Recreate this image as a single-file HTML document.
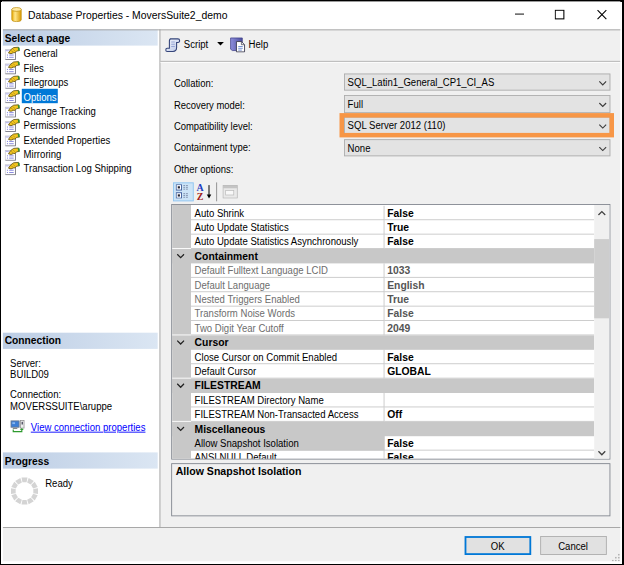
<!DOCTYPE html>
<html><head><meta charset="utf-8"><title>Database Properties</title>
<style>
*{box-sizing:border-box;margin:0;padding:0}
html,body{width:624px;height:565px;overflow:hidden;background:#000}
body{font-family:"Liberation Sans",sans-serif;font-size:11px;color:#000;position:relative}
#frame{position:absolute;left:1.45px;top:1.5px;width:620.95px;height:562px;background:#fff}
#win{position:absolute;left:0;top:0;width:687.3px;height:622.3px;background:#f0f0f0;transform-origin:0 0;transform:translate(2px,1.5px) scale(0.9);overflow:hidden;letter-spacing:-0.16px;white-space:nowrap}
#win div,#win span,#win svg{position:absolute}
#win span{font-size:12.5px;line-height:16px;transform-origin:0 0;transform:scaleX(0.85);letter-spacing:0}
#win span.b{font-weight:bold;transform:scaleX(0.94)}
#title{left:0;top:0;width:689px;height:31px;background:#fff}
#win #title .t{left:28.5px;top:7.5px;font-size:12.5px;transform:scaleX(0.924);color:#000}
#left{left:0;top:31px;width:174.5px;height:553px;background:#fff}
.hdr{left:0;width:173px;height:18px;background:linear-gradient(90deg,#bccde4,#dbe6f3)}
#win .hdr span{left:3px;top:1.5px;font-weight:bold;transform:scaleX(0.91)}
.nav{left:24px;top:0.6px}
.navsel{left:22px;top:0;width:40px;height:16px;background:#0078d7}
.ni{left:3px;top:0}
.lt{left:9px}
#win .lbl{left:191px;transform:scaleX(0.84)}
.cb{left:380px;width:296px;height:19.7px;background:#e3e3e3;border:1px solid #adadad}
.cb span{left:3px;top:1.1px}
.cb svg{right:3.5px;top:7px}
#grid{left:188px;top:225px;width:488px;height:284px;border:1px solid #828790;background:#fff;overflow:hidden}
.row{left:0;width:469px;height:16px}
.row .g{left:0;top:0;width:19px;height:16px;background:#c8c8c8}
.row .l{left:20.5px;top:0;width:215.5px;height:16px;border-bottom:1px solid #c8c8c8;border-right:1px solid #c8c8c8;overflow:hidden}
.row .l span{left:4.7px;top:0}
#win .row .v span{left:3px;top:0;font-weight:bold;transform:scaleX(0.92)}
.row .v{left:236px;top:0;width:233px;height:16px;border-bottom:1px solid #c8c8c8}
.row.dis .l{color:#6d6d6d}
.row.dis .v{color:#555}
.row.sel .l{background:#c8c8c8;top:-1px;height:17px}
.row.sel .l span{top:1px}
.cat{left:0;width:469px;height:16px;background:#c8c8c8}
#win .cat span{left:25px;top:0;font-weight:bold;transform:scaleX(0.92)}
.cat svg{left:5px;top:5px}
.btn{width:74px;height:21px;background:#e1e1e1;border:1px solid #adadad}
.btn span{top:2px}
</style></head><body>
<div id="frame"></div>
<div id="win">
<div id="title">
<svg style="left:9.8px;top:5.8px" width="12.4" height="16.8" viewBox="0 0 14 18" preserveAspectRatio="none"><defs><linearGradient id="dbg" x1="0" x2="1" y1="0" y2="0"><stop offset="0" stop-color="#e8a800"/><stop offset="0.35" stop-color="#ffe68a"/><stop offset="1" stop-color="#d89800"/></linearGradient></defs><path d="M1 3 v12 a6 2.5 0 0 0 12 0 v-12 z" fill="url(#dbg)" stroke="#b88600" stroke-width="0.8"/><ellipse cx="7" cy="3" rx="6" ry="2.3" fill="#ffe9a0" stroke="#b88600" stroke-width="0.8"/></svg>
<span class="t">Database Properties - MoversSuite2_demo</span>
<svg style="left:569.5px;top:13.3px" width="12" height="2"><rect width="10" height="1.2" y="0.3" fill="#000"/></svg>
<svg style="left:613.5px;top:8.5px" width="12" height="12"><rect x="0.7" y="0.7" width="9.6" height="9.6" fill="none" stroke="#000" stroke-width="1.2"/></svg>
<svg style="left:660.5px;top:8.5px" width="12" height="12"><path d="M0.7 0.7 L10.5 10.5 M10.5 0.7 L0.7 10.5" stroke="#000" stroke-width="1.2"/></svg>
</div>
<div id="left">
<div class="hdr" style="top:0"><span>Select a page</span></div>
<div style="left:0;top:18px;width:173px;height:16px"><svg class="ni" width="17" height="16" viewBox="0 0 17 16"><rect x="0.5" y="4.5" width="11.5" height="11" fill="#fff" stroke="#c4c4cc"/><path d="M12 5v10.5H1" fill="none" stroke="#7c7c84" stroke-width="1"/><rect x="1" y="5" width="3.5" height="1.2" fill="#b4b4ee"/><path d="M2.5 10.5h1.2M5 10.5h5M2.5 13h1.2M5 13h5" stroke="#8a8ade" stroke-width="1.1"/><path d="M4.2 8.2 L6.6 4.6 L10 2.2 L15.4 1.8 L16.2 5.6 L13.2 6 L11.6 7.8 L9.6 8 L7 9 Z" fill="#f3c61f" stroke="#5e4e12" stroke-width="0.9"/><path d="M7 5.5l3 2M9 3.8l3 2.6" stroke="#a8841a" stroke-width="0.7"/><path d="M14.4 1.8 L16.5 2.4 L16.5 6 L15 5.2 Z" fill="#2f8f2f"/></svg><span class="nav">General</span></div>
<div style="left:0;top:34px;width:173px;height:16px"><svg class="ni" width="17" height="16" viewBox="0 0 17 16"><rect x="0.5" y="4.5" width="11.5" height="11" fill="#fff" stroke="#c4c4cc"/><path d="M12 5v10.5H1" fill="none" stroke="#7c7c84" stroke-width="1"/><rect x="1" y="5" width="3.5" height="1.2" fill="#b4b4ee"/><path d="M2.5 10.5h1.2M5 10.5h5M2.5 13h1.2M5 13h5" stroke="#8a8ade" stroke-width="1.1"/><path d="M4.2 8.2 L6.6 4.6 L10 2.2 L15.4 1.8 L16.2 5.6 L13.2 6 L11.6 7.8 L9.6 8 L7 9 Z" fill="#f3c61f" stroke="#5e4e12" stroke-width="0.9"/><path d="M7 5.5l3 2M9 3.8l3 2.6" stroke="#a8841a" stroke-width="0.7"/><path d="M14.4 1.8 L16.5 2.4 L16.5 6 L15 5.2 Z" fill="#2f8f2f"/></svg><span class="nav">Files</span></div>
<div style="left:0;top:50px;width:173px;height:16px"><svg class="ni" width="17" height="16" viewBox="0 0 17 16"><rect x="0.5" y="4.5" width="11.5" height="11" fill="#fff" stroke="#c4c4cc"/><path d="M12 5v10.5H1" fill="none" stroke="#7c7c84" stroke-width="1"/><rect x="1" y="5" width="3.5" height="1.2" fill="#b4b4ee"/><path d="M2.5 10.5h1.2M5 10.5h5M2.5 13h1.2M5 13h5" stroke="#8a8ade" stroke-width="1.1"/><path d="M4.2 8.2 L6.6 4.6 L10 2.2 L15.4 1.8 L16.2 5.6 L13.2 6 L11.6 7.8 L9.6 8 L7 9 Z" fill="#f3c61f" stroke="#5e4e12" stroke-width="0.9"/><path d="M7 5.5l3 2M9 3.8l3 2.6" stroke="#a8841a" stroke-width="0.7"/><path d="M14.4 1.8 L16.5 2.4 L16.5 6 L15 5.2 Z" fill="#2f8f2f"/></svg><span class="nav">Filegroups</span></div>
<div style="left:0;top:66px;width:173px;height:16px"><svg class="ni" width="17" height="16" viewBox="0 0 17 16"><rect x="0.5" y="4.5" width="11.5" height="11" fill="#fff" stroke="#c4c4cc"/><path d="M12 5v10.5H1" fill="none" stroke="#7c7c84" stroke-width="1"/><rect x="1" y="5" width="3.5" height="1.2" fill="#b4b4ee"/><path d="M2.5 10.5h1.2M5 10.5h5M2.5 13h1.2M5 13h5" stroke="#8a8ade" stroke-width="1.1"/><path d="M4.2 8.2 L6.6 4.6 L10 2.2 L15.4 1.8 L16.2 5.6 L13.2 6 L11.6 7.8 L9.6 8 L7 9 Z" fill="#f3c61f" stroke="#5e4e12" stroke-width="0.9"/><path d="M7 5.5l3 2M9 3.8l3 2.6" stroke="#a8841a" stroke-width="0.7"/><path d="M14.4 1.8 L16.5 2.4 L16.5 6 L15 5.2 Z" fill="#2f8f2f"/></svg><div class=navsel></div><span class="nav" style=color:#fff>Options</span></div>
<div style="left:0;top:82px;width:173px;height:16px"><svg class="ni" width="17" height="16" viewBox="0 0 17 16"><rect x="0.5" y="4.5" width="11.5" height="11" fill="#fff" stroke="#c4c4cc"/><path d="M12 5v10.5H1" fill="none" stroke="#7c7c84" stroke-width="1"/><rect x="1" y="5" width="3.5" height="1.2" fill="#b4b4ee"/><path d="M2.5 10.5h1.2M5 10.5h5M2.5 13h1.2M5 13h5" stroke="#8a8ade" stroke-width="1.1"/><path d="M4.2 8.2 L6.6 4.6 L10 2.2 L15.4 1.8 L16.2 5.6 L13.2 6 L11.6 7.8 L9.6 8 L7 9 Z" fill="#f3c61f" stroke="#5e4e12" stroke-width="0.9"/><path d="M7 5.5l3 2M9 3.8l3 2.6" stroke="#a8841a" stroke-width="0.7"/><path d="M14.4 1.8 L16.5 2.4 L16.5 6 L15 5.2 Z" fill="#2f8f2f"/></svg><span class="nav">Change Tracking</span></div>
<div style="left:0;top:98px;width:173px;height:16px"><svg class="ni" width="17" height="16" viewBox="0 0 17 16"><rect x="0.5" y="4.5" width="11.5" height="11" fill="#fff" stroke="#c4c4cc"/><path d="M12 5v10.5H1" fill="none" stroke="#7c7c84" stroke-width="1"/><rect x="1" y="5" width="3.5" height="1.2" fill="#b4b4ee"/><path d="M2.5 10.5h1.2M5 10.5h5M2.5 13h1.2M5 13h5" stroke="#8a8ade" stroke-width="1.1"/><path d="M4.2 8.2 L6.6 4.6 L10 2.2 L15.4 1.8 L16.2 5.6 L13.2 6 L11.6 7.8 L9.6 8 L7 9 Z" fill="#f3c61f" stroke="#5e4e12" stroke-width="0.9"/><path d="M7 5.5l3 2M9 3.8l3 2.6" stroke="#a8841a" stroke-width="0.7"/><path d="M14.4 1.8 L16.5 2.4 L16.5 6 L15 5.2 Z" fill="#2f8f2f"/></svg><span class="nav">Permissions</span></div>
<div style="left:0;top:114px;width:173px;height:16px"><svg class="ni" width="17" height="16" viewBox="0 0 17 16"><rect x="0.5" y="4.5" width="11.5" height="11" fill="#fff" stroke="#c4c4cc"/><path d="M12 5v10.5H1" fill="none" stroke="#7c7c84" stroke-width="1"/><rect x="1" y="5" width="3.5" height="1.2" fill="#b4b4ee"/><path d="M2.5 10.5h1.2M5 10.5h5M2.5 13h1.2M5 13h5" stroke="#8a8ade" stroke-width="1.1"/><path d="M4.2 8.2 L6.6 4.6 L10 2.2 L15.4 1.8 L16.2 5.6 L13.2 6 L11.6 7.8 L9.6 8 L7 9 Z" fill="#f3c61f" stroke="#5e4e12" stroke-width="0.9"/><path d="M7 5.5l3 2M9 3.8l3 2.6" stroke="#a8841a" stroke-width="0.7"/><path d="M14.4 1.8 L16.5 2.4 L16.5 6 L15 5.2 Z" fill="#2f8f2f"/></svg><span class="nav">Extended Properties</span></div>
<div style="left:0;top:130px;width:173px;height:16px"><svg class="ni" width="17" height="16" viewBox="0 0 17 16"><rect x="0.5" y="4.5" width="11.5" height="11" fill="#fff" stroke="#c4c4cc"/><path d="M12 5v10.5H1" fill="none" stroke="#7c7c84" stroke-width="1"/><rect x="1" y="5" width="3.5" height="1.2" fill="#b4b4ee"/><path d="M2.5 10.5h1.2M5 10.5h5M2.5 13h1.2M5 13h5" stroke="#8a8ade" stroke-width="1.1"/><path d="M4.2 8.2 L6.6 4.6 L10 2.2 L15.4 1.8 L16.2 5.6 L13.2 6 L11.6 7.8 L9.6 8 L7 9 Z" fill="#f3c61f" stroke="#5e4e12" stroke-width="0.9"/><path d="M7 5.5l3 2M9 3.8l3 2.6" stroke="#a8841a" stroke-width="0.7"/><path d="M14.4 1.8 L16.5 2.4 L16.5 6 L15 5.2 Z" fill="#2f8f2f"/></svg><span class="nav">Mirroring</span></div>
<div style="left:0;top:146px;width:173px;height:16px"><svg class="ni" width="17" height="16" viewBox="0 0 17 16"><rect x="0.5" y="4.5" width="11.5" height="11" fill="#fff" stroke="#c4c4cc"/><path d="M12 5v10.5H1" fill="none" stroke="#7c7c84" stroke-width="1"/><rect x="1" y="5" width="3.5" height="1.2" fill="#b4b4ee"/><path d="M2.5 10.5h1.2M5 10.5h5M2.5 13h1.2M5 13h5" stroke="#8a8ade" stroke-width="1.1"/><path d="M4.2 8.2 L6.6 4.6 L10 2.2 L15.4 1.8 L16.2 5.6 L13.2 6 L11.6 7.8 L9.6 8 L7 9 Z" fill="#f3c61f" stroke="#5e4e12" stroke-width="0.9"/><path d="M7 5.5l3 2M9 3.8l3 2.6" stroke="#a8841a" stroke-width="0.7"/><path d="M14.4 1.8 L16.5 2.4 L16.5 6 L15 5.2 Z" fill="#2f8f2f"/></svg><span class="nav">Transaction Log Shipping</span></div>
<div class="hdr" style="top:336.6px"><span>Connection</span></div>
<span class="lt" style="top:362.5px">Server:</span>
<span class="lt" style="top:375px">BUILD09</span>
<span class="lt" style="top:398px">Connection:</span>
<span class="lt" style="top:410.5px">MOVERSSUITE\aruppe</span>
<svg style="left:9px;top:434px" width="17" height="15" viewBox="0 0 17 15"><rect x="1" y="1" width="9" height="7" fill="#3d7fd6" stroke="#6a7a90" stroke-width="1"/><rect x="2.5" y="2.5" width="3" height="2" fill="#8ab8f0"/><rect x="3" y="8.5" width="5" height="1.5" fill="#8a8a8a"/><rect x="11.5" y="0.5" width="4" height="8.5" fill="#eee" stroke="#8a8a8a" stroke-width="0.8"/><rect x="12.7" y="2" width="1.6" height="3" fill="#556"/><path d="M3.5 10.5v2.5h9.5v-2.5" fill="none" stroke="#2e9a2e" stroke-width="1.3"/><path d="M10.8 11.2l2.2-2.4 2.2 2.4z" fill="#2e9a2e"/></svg>
<span style="left:32px;top:433.5px;color:#0000ff;text-decoration:underline">View connection properties</span>
<div class="hdr" style="top:470.3px"><span>Progress</span></div>
<span style="left:48px;top:496px">Ready</span>
<svg style="left:9px;top:497px" width="32" height="32" viewBox="-16 -16 32 32"><path d="M-3.3 -15 L3.3 -15 L2.3 -9.8 L-2.3 -9.8 Z" fill="#d4d4d4" transform="rotate(0)"/><path d="M-3.3 -15 L3.3 -15 L2.3 -9.8 L-2.3 -9.8 Z" fill="#d4d4d4" transform="rotate(30)"/><path d="M-3.3 -15 L3.3 -15 L2.3 -9.8 L-2.3 -9.8 Z" fill="#d4d4d4" transform="rotate(60)"/><path d="M-3.3 -15 L3.3 -15 L2.3 -9.8 L-2.3 -9.8 Z" fill="#d4d4d4" transform="rotate(90)"/><path d="M-3.3 -15 L3.3 -15 L2.3 -9.8 L-2.3 -9.8 Z" fill="#d4d4d4" transform="rotate(120)"/><path d="M-3.3 -15 L3.3 -15 L2.3 -9.8 L-2.3 -9.8 Z" fill="#d4d4d4" transform="rotate(150)"/><path d="M-3.3 -15 L3.3 -15 L2.3 -9.8 L-2.3 -9.8 Z" fill="#d4d4d4" transform="rotate(180)"/><path d="M-3.3 -15 L3.3 -15 L2.3 -9.8 L-2.3 -9.8 Z" fill="#d4d4d4" transform="rotate(210)"/><path d="M-3.3 -15 L3.3 -15 L2.3 -9.8 L-2.3 -9.8 Z" fill="#d4d4d4" transform="rotate(240)"/><path d="M-3.3 -15 L3.3 -15 L2.3 -9.8 L-2.3 -9.8 Z" fill="#d4d4d4" transform="rotate(270)"/><path d="M-3.3 -15 L3.3 -15 L2.3 -9.8 L-2.3 -9.8 Z" fill="#d4d4d4" transform="rotate(300)"/><path d="M-3.3 -15 L3.3 -15 L2.3 -9.8 L-2.3 -9.8 Z" fill="#d4d4d4" transform="rotate(330)"/></svg>
</div>
<div style="left:0;top:30.6px;width:689px;height:1px;background:#a0a0a0"></div>
<div style="left:174.5px;top:31px;width:1px;height:553px;background:#a0a0a0"></div>
<div style="left:0;top:584px;width:689px;height:1px;background:#a0a0a0"></div>
<div style="left:0;top:0;width:1px;height:623px;background:#fff"></div>
<div id="tb" style="left:175px;top:31px;width:514px;height:35px">
<svg style="left:6px;top:8.5px" width="18" height="17" viewBox="0 0 18 17"><defs><linearGradient id="scg" x1="0" x2="1" y1="0" y2="1"><stop offset="0" stop-color="#f6f8fd"/><stop offset="1" stop-color="#b9c6e6"/></linearGradient></defs><path d="M5.5 1.5 H14.5 C17 1.5 17 5.5 14.5 5.5 H13 V11.5 C13 15.5 10 15.5 9 15.5 H2.5 C0.5 15.5 0.5 12 2.5 12 H5 V4 C5 2.5 5.5 1.5 6.5 1.5" fill="url(#scg)" stroke="#35457a" stroke-width="1.2"/><path d="M7 5h4M7 7.5h4M7 10h4" stroke="#8a9ad0" stroke-width="0.9"/></svg>
<span style="left:27px;top:8.5px">Script</span>
<svg style="left:64px;top:14px" width="8" height="5"><path d="M0 0h7.5L3.75 4z" fill="#000"/></svg>
<svg style="left:77.5px;top:7.5px" width="18" height="18" viewBox="0 0 18 18"><defs><linearGradient id="hbg" x1="0" x2="1" y1="0" y2="0"><stop offset="0" stop-color="#8e8fdc"/><stop offset="1" stop-color="#4c4e9e"/></linearGradient></defs><path d="M1 1.5 H14 V15.5 H3 L1 14 Z" fill="url(#hbg)" stroke="#3a3c86" stroke-width="0.8"/><path d="M7.5 5.5h5.5l3.5 3.5v8h-9z" fill="#fff" stroke="#3c3c50" stroke-width="1"/><path d="M13 5.5v3.5h3.5" fill="none" stroke="#3c3c50" stroke-width="0.8"/><path d="M9.5 11h5M9.5 13h5M9.5 15h4" stroke="#5a7ac8" stroke-width="0.9"/></svg>
<span style="left:99px;top:8.5px">Help</span>
</div>
<div style="left:175.5px;top:66px;width:511.8px;height:1px;background:#a0a0a0"></div>
<div style="left:175.5px;top:67px;width:511.8px;height:1px;background:#fff"></div>
<span class="lbl" style="top:82.6px">Collation:</span>
<div class="cb" style="top:79.8px"><span>SQL_Latin1_General_CP1_CI_AS</span><svg width="9" height="6" viewBox="0 0 9 6"><path d="M0.7 0.8 L4.5 4.6 L8.3 0.8" fill="none" stroke="#3c3c3c" stroke-width="1.3"/></svg></div>
<span class="lbl" style="top:106.6px">Recovery model:</span>
<div class="cb" style="top:103.9px"><span>Full</span><svg width="9" height="6" viewBox="0 0 9 6"><path d="M0.7 0.8 L4.5 4.6 L8.3 0.8" fill="none" stroke="#3c3c3c" stroke-width="1.3"/></svg></div>
<span class="lbl" style="top:130.7px">Compatibility level:</span>
<div class="cb" style="top:128.2px"><span>SQL Server 2012 (110)</span><svg width="9" height="6" viewBox="0 0 9 6"><path d="M0.7 0.8 L4.5 4.6 L8.3 0.8" fill="none" stroke="#3c3c3c" stroke-width="1.3"/></svg></div>
<span class="lbl" style="top:154.2px">Containment type:</span>
<div class="cb" style="top:152.5px"><span>None</span><svg width="9" height="6" viewBox="0 0 9 6"><path d="M0.7 0.8 L4.5 4.6 L8.3 0.8" fill="none" stroke="#3c3c3c" stroke-width="1.3"/></svg></div>
<span class="lbl" style="top:179px">Other options:</span>
<div style="left:374.5px;top:123.9px;width:305.5px;height:27.6px;border:5.6px solid #f79646"></div>
<div style="left:189.5px;top:200.5px;width:23px;height:21px;background:#cce4f7;border:1px solid #92c6f0"></div>
<svg style="left:193px;top:203px" width="16" height="16" viewBox="0 0 16 16"><rect x="0.5" y="0.5" width="6" height="6" fill="#fff" stroke="#3a5a9a"/><rect x="0.5" y="9.5" width="6" height="6" fill="#fff" stroke="#3a5a9a"/><rect x="2.3" y="2.3" width="2.4" height="2.4" fill="#223"/><rect x="2.3" y="11.3" width="2.4" height="2.4" fill="#223"/><path d="M8.5 1.5h6M8.5 3.5h6M8.5 5.5h6M8.5 10.5h6M8.5 12.5h6M8.5 14.5h6" stroke="#7a8aa8" stroke-width="1" stroke-dasharray="2 1"/></svg>
<span style="left:216px;top:198.5px;font-family:'Liberation Serif',serif;font-weight:bold;font-size:11px;color:#1a3ac0;transform:none">A</span>
<span style="left:216.3px;top:207.5px;font-family:'Liberation Serif',serif;font-weight:bold;font-size:11px;color:#a01818;transform:none">Z</span>
<svg style="left:225.5px;top:203.5px" width="8" height="16" viewBox="0 0 8 16"><path d="M4 0v12" stroke="#000" stroke-width="1.1"/><path d="M1.5 10.5h5L4 15z" fill="#000"/></svg>
<div style="left:238px;top:201px;width:1px;height:21px;background:#8a8a8a"></div>
<svg style="left:245px;top:204px" width="17" height="15" viewBox="0 0 17 15"><rect x="0.5" y="0.5" width="16" height="14" fill="#e9e9e9" stroke="#b4b4b4"/><rect x="0.5" y="0.5" width="16" height="3" fill="#c4c4c4"/><rect x="3.5" y="6" width="9" height="5" fill="#f8f8f8" stroke="#bcbcbc" stroke-width="0.8"/></svg>
<div id="grid">
<div style="left:0;top:0;width:20.5px;height:283px;background:#c8c8c8"></div>
<div class="row" style="top:1px"><div class="l"><span>Auto Shrink</span></div><div class="v"><span>False</span></div></div>
<div class="row" style="top:17px"><div class="l"><span>Auto Update Statistics</span></div><div class="v"><span>True</span></div></div>
<div class="row" style="top:33px"><div class="l"><span>Auto Update Statistics Asynchronously</span></div><div class="v"><span>False</span></div></div>
<div class="cat" style="top:49px"><div style="left:0;top:-1px;width:20.5px;height:1px;background:#fff"></div><svg width="9" height="6" viewBox="0 0 9 6"><path d="M0.7 0.8 L4.5 4.6 L8.3 0.8" fill="none" stroke="#222" stroke-width="1.4"/></svg><span>Containment</span></div>
<div class="row dis" style="top:65px"><div class="l"><span>Default Fulltext Language LCID</span></div><div class="v"><span>1033</span></div></div>
<div class="row dis" style="top:81px"><div class="l"><span>Default Language</span></div><div class="v"><span>English</span></div></div>
<div class="row dis" style="top:97px"><div class="l"><span>Nested Triggers Enabled</span></div><div class="v"><span>True</span></div></div>
<div class="row dis" style="top:113px"><div class="l"><span>Transform Noise Words</span></div><div class="v"><span>False</span></div></div>
<div class="row dis" style="top:129px"><div class="l"><span>Two Digit Year Cutoff</span></div><div class="v"><span>2049</span></div></div>
<div class="cat" style="top:145px"><div style="left:0;top:-1px;width:20.5px;height:1px;background:#fff"></div><svg width="9" height="6" viewBox="0 0 9 6"><path d="M0.7 0.8 L4.5 4.6 L8.3 0.8" fill="none" stroke="#222" stroke-width="1.4"/></svg><span>Cursor</span></div>
<div class="row" style="top:161px"><div class="l"><span>Close Cursor on Commit Enabled</span></div><div class="v"><span>False</span></div></div>
<div class="row" style="top:177px"><div class="l"><span>Default Cursor</span></div><div class="v"><span>GLOBAL</span></div></div>
<div class="cat" style="top:193px"><div style="left:0;top:-1px;width:20.5px;height:1px;background:#fff"></div><svg width="9" height="6" viewBox="0 0 9 6"><path d="M0.7 0.8 L4.5 4.6 L8.3 0.8" fill="none" stroke="#222" stroke-width="1.4"/></svg><span>FILESTREAM</span></div>
<div class="row" style="top:209px"><div class="l"><span>FILESTREAM Directory Name</span></div><div class="v"><span></span></div></div>
<div class="row" style="top:225px"><div class="l"><span>FILESTREAM Non-Transacted Access</span></div><div class="v"><span>Off</span></div></div>
<div class="cat" style="top:241px"><div style="left:0;top:-1px;width:20.5px;height:1px;background:#fff"></div><svg width="9" height="6" viewBox="0 0 9 6"><path d="M0.7 0.8 L4.5 4.6 L8.3 0.8" fill="none" stroke="#222" stroke-width="1.4"/></svg><span>Miscellaneous</span></div>
<div class="row sel" style="top:257px"><div class="l"><span>Allow Snapshot Isolation</span></div><div class="v"><span>False</span></div></div>
<div class="row" style="top:273px"><div class="l"><span>ANSI NULL Default</span></div><div class="v"><span>False</span></div></div>
<div style="left:469px;top:0;width:17px;height:282px;background:#f0f0f0"></div>
<div style="left:469px;top:38px;width:17px;height:88px;background:#cdcdcd"></div>
<svg style="left:473px;top:6px" width="9" height="6" viewBox="0 0 9 6"><path d="M0.7 5.2 L4.5 1.4 L8.3 5.2" fill="none" stroke="#404040" stroke-width="1.4"/></svg>
<svg style="left:472.5px;top:273px" width="9" height="6" viewBox="0 0 9 6"><path d="M0.7 0.8 L4.5 4.6 L8.3 0.8" fill="none" stroke="#404040" stroke-width="1.4"/></svg>
</div>
<div style="left:188px;top:512.5px;width:488px;height:59px;border:1px solid #828790;background:#f0f0f0"></div>
<span class="b" style="left:193px;top:514px">Allow Snapshot Isolation</span>
<div class="btn" style="left:514px;top:594px;border:2px solid #0078d7"><span style="left:26.5px;top:1px">OK</span></div>
<div class="btn" style="left:598px;top:594px"><span style="left:19px">Cancel</span></div>
<svg style="left:677px;top:612.5px" width="10" height="10" viewBox="0 0 12 12"><g fill="#b0b0b0"><rect x="9" y="1" width="2" height="2"/><rect x="9" y="5" width="2" height="2"/><rect x="9" y="9" width="2" height="2"/><rect x="5" y="5" width="2" height="2"/><rect x="5" y="9" width="2" height="2"/><rect x="1" y="9" width="2" height="2"/></g></svg>
</div>
</body></html>
